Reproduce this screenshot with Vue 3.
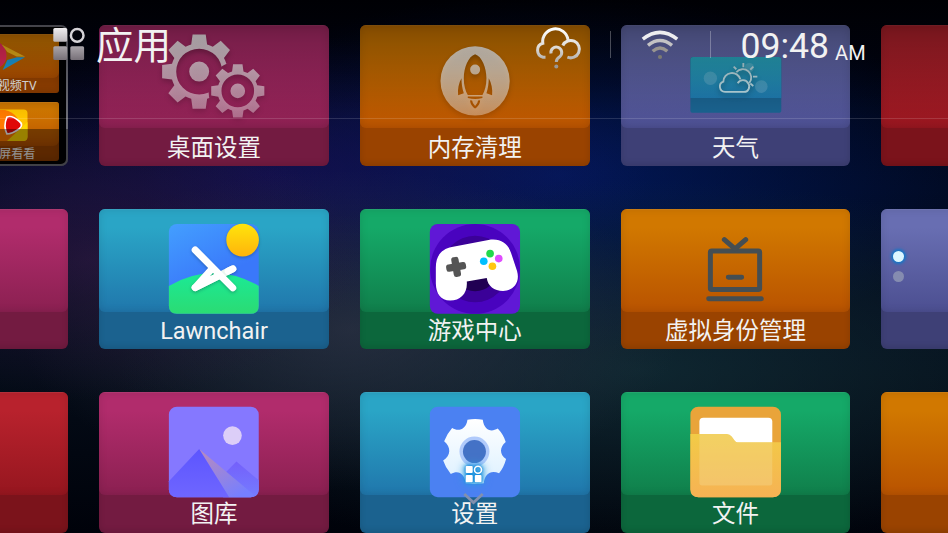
<script setup>
import { ref } from "vue";

const time = ref("09:48");
const period = ref("AM");

/**
 * APP TILES
 * origin = top left corner of the artwork inside its own drawing space
 */
const tiles = [
    { id: "desk", name: "桌面设置", color: "pink", origin: "27.6 30" },
    { id: "clean", name: "内存清理", color: "orange", origin: "29.7 30" },
    { id: "weather", name: "天气", color: "indigo", origin: "62 30" },
    { id: "r1", name: "", color: "red", origin: "0 0" },
    { id: "l2", name: "", color: "pink", origin: "0 0" },
    { id: "lawn", name: "Lawnchair", color: "cyan", origin: "27.6 26" },
    { id: "game", name: "游戏中心", color: "green", origin: "29.7 26" },
    { id: "tv", name: "虚拟身份管理", color: "orange", origin: "32 26" },
    { id: "r2", name: "", color: "indigo", origin: "0 0" },
    { id: "l3", name: "", color: "red", origin: "0 0" },
    { id: "gallery", name: "图库", color: "pink", origin: "27.6 22" },
    { id: "settings", name: "设置", color: "cyan", origin: "29.7 22" },
    { id: "files", name: "文件", color: "green", origin: "32 22" },
    { id: "r3", name: "", color: "orange", origin: "0 0" },
];

const folder = [
    { id: "video", name: "云视频TV", color: "orange" },
    { id: "watch", name: "大屏看看", color: "orange" },
];

// eight teeth, a ring and a hub
const gearPath = (cx, cy, outer, body, hole, hub) => {
    const pts = [];
    for (let i = 0; i < 8; i++) {
        const a = (i * Math.PI) / 4 - Math.PI / 2;
        for (const [r, d] of [
            [body, -0.285],
            [outer, -0.175],
            [outer, 0.175],
            [body, 0.285],
        ]) {
            pts.push(`${(cx + r * Math.cos(a + d)).toFixed(1)} ${(cy + r * Math.sin(a + d)).toFixed(1)}`);
        }
        const m = a + Math.PI / 8;
        pts.push(`${(cx + body * Math.cos(m)).toFixed(1)} ${(cy + body * Math.sin(m)).toFixed(1)}`);
    }
    const circle = (r) => `M${cx - r} ${cy}a${r} ${r} 0 1 0 ${2 * r} 0a${r} ${r} 0 1 0 ${-2 * r} 0Z`;
    return `M${pts.join("L")}Z${circle(hole)}${circle(hub)}`;
};

const bigGear = gearPath(328, 170, 113, 85, 69, 30);
const smallGear = gearPath(444, 228, 81, 61, 49, 22);
</script>

<template>
    <div class="launcher">
        <main class="tiles">
            <section class="folder">
                <div v-for="app in folder" :key="app.id" class="tile mini" :class="app.color">
                    <div class="face"></div>
                    <svg class="art" viewBox="0 0 96 59">
                        <g v-if="app.id === 'video'">
                            <path d="M37 9Q43 13 43.5 21Q44 29 37 33L30 36V6Z" fill="#ee2c5c" />
                            <path d="M38.700 10.500L62.300 22.700L53.700 22.500L44.300 18Z" fill="#f2b81c" />
                            <path d="M62 23.300L39.700 36L44.300 26L54 23.300Z" fill="#1ea4e6" />
                        </g>
                        <g v-else>
                            <rect x="32" y="7.500" width="32.500" height="31.500" rx="4" fill="#ffc400" />
                            <path d="M32 8H42Q56 11 60 30L52 39H32Z" fill="#ff7a00" />
                            <path d="M64.500 20V35Q64 39 60 39H44Z" fill="#ffd800" />
                            <path d="M44 15Q49 13 56 19Q61 23 56 27Q49 32 44 32Q40 24 44 15Z" fill="#e00808" stroke="#fff" stroke-width="1.700" />
                        </g>
                    </svg>
                    <span class="label">{{ app.name }}</span>
                </div>
            </section>

            <div v-for="tile in tiles" :key="tile.id" class="tile" :class="tile.color">
                <div class="face"></div>
                <svg class="art" :viewBox="`${tile.origin} 689 423`">
                    <!-- GEARS -->
                    <g v-if="tile.id === 'desk'" class="raised">
                        <defs>
                            <linearGradient id="gearFill" gradientUnits="userSpaceOnUse" x1="0" y1="58" x2="0" y2="305">
                                <stop offset="0" stop-color="#fff" stop-opacity=".92" />
                                <stop offset="1" stop-color="#fff" stop-opacity=".36" />
                            </linearGradient>
                            <mask id="gearCut" maskUnits="userSpaceOnUse" x="200" y="40" width="340" height="280">
                                <rect x="200" y="40" width="340" height="280" fill="#fff" />
                                <circle cx="444" cy="228" r="88" fill="#000" />
                            </mask>
                        </defs>
                        <path :d="bigGear" fill="url(#gearFill)" fill-rule="evenodd" mask="url(#gearCut)" />
                        <path :d="smallGear" fill="url(#gearFill)" fill-rule="evenodd" />
                    </g>

                    <!-- ROCKET -->
                    <g v-else-if="tile.id === 'clean'" class="raised">
                        <defs>
                            <linearGradient id="rocketFill" gradientUnits="userSpaceOnUse" x1="0" y1="94" x2="0" y2="302">
                                <stop offset="0" stop-color="#fff" stop-opacity=".88" />
                                <stop offset="1" stop-color="#fff" stop-opacity=".36" />
                            </linearGradient>
                        </defs>
                        <path
                            fill="url(#rocketFill)"
                            fill-rule="evenodd"
                            d="M271 198a104 104 0 1 0 208 0a104 104 0 1 0 -208 0Z
                               M375 118C395 124 409 158 409 190C409 212 404 228 397 240H353C346 228 341 212 341 190C341 158 355 124 375 118Z
                               M360 164a15 15 0 1 0 30 0a15 15 0 1 0 -30 0Z
                               M334 190C326 205 322 222 324 241L341 235C336 220 334 205 334 190Z
                               M416 190C424 205 428 222 426 241L409 235C414 220 416 205 416 190Z
                               M353 245H397V249Q375 255 353 249Z
                               M360 256C360 268 368 276 375 281C382 276 390 268 390 256L384 257Q383 267 375 273Q367 267 366 257Z"
                        />
                    </g>

                    <!-- WEATHER -->
                    <g v-else-if="tile.id === 'weather'">
                        <defs>
                            <linearGradient id="skyFill" x1="0" y1="0" x2="0" y2="1">
                                <stop offset="0" stop-color="#29aac3" />
                                <stop offset="1" stop-color="#1f7bb0" />
                            </linearGradient>
                        </defs>
                        <rect x="270" y="126" width="273" height="168" rx="8" fill="#1a6390" />
                        <path d="M270 249V134q0-8 8-8H535q8 0 8 8V249Z" fill="url(#skyFill)" />
                        <g fill="#fff" fill-opacity=".16">
                            <circle cx="330" cy="190" r="20" />
                            <circle cx="483" cy="215" r="19" />
                            <circle cx="447" cy="158" r="14" />
                        </g>
                        <g class="raised" fill="none" stroke="#bcdce4" stroke-width="5.500">
                            <path d="M374 231H430A16 16 0 0 0 444 206A18 18 0 0 0 412 205M420 193A26 26 0 0 0 369 200A16 16 0 0 0 374 231M408 172A24 24 0 1 1 447 204" />
                            <path d="M429 144V157M400 155L408 163M459 155L450 164M458 185H471M450 206L459 213" />
                        </g>
                    </g>

                    <!-- LAWNCHAIR -->
                    <g v-else-if="tile.id === 'lawn'">
                        <defs>
                            <linearGradient id="lawnSky" x1="0" y1="0" x2=".5" y2="1">
                                <stop offset="0" stop-color="#439fff" />
                                <stop offset=".7" stop-color="#3a78fa" />
                            </linearGradient>
                            <linearGradient id="lawnSun" x1="0" y1="0" x2="0" y2="1">
                                <stop offset="0" stop-color="#ffe40c" />
                                <stop offset="1" stop-color="#ffb40c" />
                            </linearGradient>
                            <linearGradient id="lawnHill" x1="0" y1="0" x2="0" y2="1">
                                <stop offset="0" stop-color="#1bea96" />
                                <stop offset="1" stop-color="#2bdb73" />
                            </linearGradient>
                        </defs>
                        <rect x="237" y="71" width="270" height="270" rx="24" fill="url(#lawnSky)" />
                        <path d="M237 257Q372 180 507 257V317q0 24-24 24H261q-24 0-24-24Z" fill="url(#lawnHill)" />
                        <circle class="soft" cx="458.500" cy="119.500" r="49" fill="url(#lawnSun)" />
                        <g class="soft" fill="none" stroke-width="21" stroke-linecap="round">
                            <path d="M316 262L429 206" stroke="#e9f7ef" />
                            <path d="M429 206L415 213" stroke="#fff" />
                            <path d="M316 262L368 204M316 262L385 228" stroke="#fff" />
                            <path d="M316 149L429 263" stroke="#fff" />
                        </g>
                    </g>

                    <!-- GAMEPAD -->
                    <g v-else-if="tile.id === 'game'">
                        <rect x="239" y="71" width="271" height="270" rx="24" fill="#6018d6" />
                        <circle cx="375" cy="206" r="135" fill="#4903bf" />
                        <circle cx="375" cy="206" r="100" fill="#3b0198" />
                        <circle cx="375" cy="206" r="67" fill="#210053" />
                        <path
                            fill="#fff"
                            d="M257 202C257 165 275 146 305 140L415 119C452 113 474 130 483 158L501 212C511 247 490 272 459 272C432 272 413 257 410 233L350 244C353 279 331 301 300 301C271 301 258 281 257 250Z"
                        />
                        <g transform="rotate(-10 318 200)" fill="#555">
                            <rect x="288" y="189" width="60" height="22" rx="8" />
                            <rect x="307" y="170" width="22" height="60" rx="8" />
                        </g>
                        <circle cx="420" cy="160" r="11.500" fill="#23d94c" />
                        <circle cx="446" cy="175" r="11.500" fill="#df4cff" />
                        <circle cx="401" cy="183" r="11.500" fill="#00bfff" />
                        <circle cx="427" cy="198" r="11.500" fill="#ffc710" />
                    </g>

                    <!-- TV BOX -->
                    <g v-else-if="tile.id === 'tv'" fill="none" stroke="#454e52" stroke-width="15" stroke-linecap="round" stroke-linejoin="round">
                        <rect x="300" y="152" width="148" height="116" rx="4" />
                        <path d="M342 118L374 146L406 118M354 231H394M295 296H453" />
                    </g>

                    <!-- GALLERY -->
                    <g v-else-if="tile.id === 'gallery'">
                        <defs>
                            <linearGradient id="slope" x1="0" y1="0" x2=".7" y2="1">
                                <stop offset="0" stop-color="#bb8bbb" />
                                <stop offset="1" stop-color="#767fff" />
                            </linearGradient>
                            <linearGradient id="peak" x1="0" y1="0" x2="0" y2="1">
                                <stop offset="0" stop-color="#5c55ff" />
                                <stop offset="1" stop-color="#6f66ff" />
                            </linearGradient>
                            <linearGradient id="backPeak" x1="0" y1="0" x2="0" y2="1">
                                <stop offset="0" stop-color="#7460fb" />
                                <stop offset="1" stop-color="#757cff" />
                            </linearGradient>
                        </defs>
                        <rect x="237" y="66" width="270" height="272" rx="24" fill="#8578ff" />
                        <circle cx="428" cy="153" r="28" fill="#dccef8" />
                        <path d="M440 231L507 287V314q0 24-24 24H400L380 292Z" fill="url(#backPeak)" />
                        <path d="M328 193L418 338H483L492 331Z" fill="url(#slope)" />
                        <path d="M328 193L237 290V314q0 24 24 24H418Z" fill="url(#peak)" />
                    </g>

                    <!-- SETTINGS -->
                    <g v-else-if="tile.id === 'settings'">
                        <defs>
                            <linearGradient id="cogFill" x1="0" y1="0" x2="0" y2="1">
                                <stop offset="0" stop-color="#fff" />
                                <stop offset="1" stop-color="#dcf0ff" />
                            </linearGradient>
                        </defs>
                        <rect x="239" y="66" width="271" height="272" rx="24" fill="#4b81f2" />
                        <path
                            fill="url(#cogFill)"
                            d="M352 105Q375 101 398 105C402 136 422 144 443 132Q460 150 467 172C448 188 448 210 468 223Q462 247 447 266C422 255 404 268 401 296Q375 301 347 296C343 268 326 255 302 268Q286 250 279 228C303 212 303 188 282 170Q290 148 306 130C325 142 348 134 352 105Z"
                        />
                        <circle cx="373" cy="201" r="45" fill="#b0cafb" />
                        <circle cx="373" cy="201" r="34.500" fill="#4472c6" />
                    </g>

                    <!-- FILES -->
                    <g v-else-if="tile.id === 'files'">
                        <defs>
                            <linearGradient id="fileFill" x1="0" y1="0" x2="0" y2="1">
                                <stop offset="0" stop-color="#f2cb46" />
                                <stop offset="1" stop-color="#f6b254" />
                            </linearGradient>
                        </defs>
                        <rect x="240" y="66" width="272" height="272" rx="24" fill="#e9a43a" />
                        <rect x="267" y="99" width="219" height="110" rx="12" fill="#fff" />
                        <path d="M240 148H350Q358 148 364 156L374 169Q377 173 382 173H512V314q0 24-24 24H264q-24 0-24-24Z" fill="url(#fileFill)" />
                        <path d="M267 148H350Q358 148 364 156L374 169Q377 173 382 173H486V295q0 8-8 8H275q-8 0-8-8Z" fill="#f4e0a0" fill-opacity=".32" />
                    </g>
                </svg>
                <span class="label">{{ tile.name }}</span>
            </div>
        </main>

        <!-- TOP BAR -->
        <header class="topbar">
            <div class="topbar-row">
                <svg class="apps-icon" width="32" height="44" viewBox="53 24 32 44">
                    <defs>
                        <linearGradient id="appsFill" gradientUnits="userSpaceOnUse" x1="0" y1="28" x2="0" y2="60">
                            <stop offset="0" stop-color="#efedef" />
                            <stop offset="1" stop-color="#777078" />
                        </linearGradient>
                    </defs>
                    <g fill="url(#appsFill)">
                        <rect x="53.300" y="28" width="13.800" height="13.800" rx="1.500" />
                        <rect x="53.300" y="46.200" width="13.800" height="13.800" rx="1.500" />
                        <rect x="70.300" y="46.200" width="13.800" height="13.800" rx="1.500" />
                    </g>
                    <circle cx="77.200" cy="35.400" r="6.300" fill="none" stroke="#d4d2d6" stroke-width="2.500" />
                </svg>
                <h1 class="title">应用</h1>

                <div class="status">
                    <svg class="cloud" width="50" height="44" viewBox="0 -1 50 44">
                        <defs>
                            <linearGradient id="cloudStroke" gradientUnits="userSpaceOnUse" x1="0" y1="3" x2="0" y2="43">
                                <stop offset="0" stop-color="#fff" />
                                <stop offset=".5" stop-color="#dcd9d5" />
                                <stop offset="1" stop-color="#9a9896" />
                            </linearGradient>
                        </defs>
                        <g fill="none" stroke="url(#cloudStroke)" stroke-width="3">
                            <path d="M12.500 32.200H10A7.200 7.200 0 0 1 9.800 18.300A12.500 12.500 0 0 1 35 14.800M29.800 20.500A8.700 8.700 0 1 1 34.400 32.200" />
                            <path d="M18 28.500A5.400 5.400 0 1 1 27 31.500Q23.300 33.700 23.300 37" />
                        </g>
                        <circle cx="23.300" cy="41.400" r="2" fill="#9a9896" />
                    </svg>
                    <span class="divider"></span>
                    <svg class="wifi" width="38" height="44" viewBox="641 24 38 44">
                        <g fill="none" stroke-width="3.500">
                            <path d="M642.800 39.200Q660 25.500 677.200 39.200" stroke="#eeeef0" />
                            <path d="M648 45.300Q660 35.800 672 45.300" stroke="#c4c3c4" />
                            <path d="M652.700 51.200Q660 44.800 667.300 51.200" stroke="#999590" />
                        </g>
                        <circle cx="660" cy="57" r="2.100" fill="#7c7a72" />
                    </svg>
                    <span class="divider"></span>
                    <span class="clock">{{ time }}</span>
                    <span class="period">{{ period }}</span>
                </div>
            </div>
        </header>

        <!-- PAGE DOTS -->
        <div class="pages">
            <i class="dot active"></i>
            <i class="dot"></i>
        </div>

        <!-- DRAWER HINT -->
        <svg class="drawer" width="40" height="50" viewBox="454 460 40 50">
            <g class="glow">
                <rect x="465.700" y="466" width="7" height="7" rx="1" fill="#fff" />
                <rect x="465.700" y="475" width="7" height="7.300" rx="1" fill="#fff" />
                <rect x="474.800" y="475" width="6.700" height="7.300" rx="1" fill="#fff" />
                <circle cx="478" cy="469.700" r="3.500" fill="none" stroke="#fff" stroke-width="1.600" />
            </g>
            <path d="M464.300 494L473.500 502.500L482.700 494" fill="none" stroke="#8290ae" stroke-width="2.800" />
        </svg>
    </div>
</template>

<style>
body {
    background: #00010a;
    overflow: hidden;
}
</style>

<style scoped>
.launcher {
    position: relative;
    width: 948px;
    height: 533px;
    overflow: hidden;
    font-family: Roboto, "Noto Sans CJK SC", sans-serif;
    color: #f2f2f2;
    background:
        radial-gradient(ellipse 270px 140px at 90px 260px, rgba(52, 26, 68, 0.6), transparent),
        radial-gradient(ellipse 330px 160px at 350px 330px, rgba(54, 58, 78, 0.62), transparent),
        radial-gradient(ellipse 520px 190px at 640px 370px, rgba(22, 56, 64, 0.6), transparent),
        radial-gradient(ellipse 380px 140px at 270px 175px, rgba(32, 18, 98, 0.55), transparent),
        radial-gradient(ellipse 420px 180px at 560px 175px, rgba(2, 28, 105, 0.75), transparent),
        linear-gradient(#000008, #010a22 35%, #040c18 70%, #00020a);
}

.tiles {
    display: grid;
    grid-template-columns: repeat(5, 229.7px);
    grid-auto-rows: 140.8px;
    gap: 42.6px 31px;
    margin-left: -161.5px;
    padding-top: 25.2px;
}

/* TILE */
.tile {
    display: grid;
    grid-template: 103px 1fr / 1fr;
    border-radius: 6px;
    overflow: hidden;
    background: var(--base);
    box-shadow: inset 0 -2px 6px rgba(0, 0, 0, 0.12);
}

.face {
    grid-area: 1 / 1;
    border-radius: 0 0 6px 6px;
    background: linear-gradient(var(--top) 18%, var(--bottom));
    box-shadow:
        inset 0 1px 1px rgba(255, 255, 255, 0.08),
        inset 0 0 8px rgba(0, 0, 0, 0.12);
}

.art {
    grid-area: 1 / 1 / 3 / 2;
    width: 100%;
    height: 100%;
}

.label {
    grid-area: 2 / 1;
    place-self: center;
    white-space: nowrap;
    font-size: 23.5px;
    line-height: 36px;
    padding-top: 1.2px;
}

.pink {
    --top: #b12c6c;
    --bottom: #8b2051;
    --base: #731b41;
}

.orange {
    --top: #d17800;
    --bottom: #b95300;
    --base: #9a4300;
}

.indigo {
    --top: #686eb2;
    --bottom: #4c4f91;
    --base: #3e4076;
}

.red {
    --top: #b8222d;
    --bottom: #96161f;
    --base: #7b131b;
}

.cyan {
    --top: #2aa5c6;
    --bottom: #2077ac;
    --base: #1b628f;
}

.green {
    --top: #15a968;
    --bottom: #107f4b;
    --base: #0c673c;
}

/* FOLDER */
.folder {
    position: relative;
    box-sizing: border-box;
    display: grid;
    grid-template: 59px 59px / 96px;
    gap: 9px;
    justify-content: end;
    padding: 7px;
    border: 2px solid #6c6c76;
    border-radius: 7px;
    background: #010103;
}

.folder::after {
    content: "";
    position: absolute;
    inset: 102px -2px -2px;
    background: rgba(0, 0, 0, 0.4);
    border-radius: 0 0 7px 7px;
}

.mini {
    grid-template: 44px 15px / 1fr;
    border-radius: 3px;
}

.mini .label {
    font-size: 12px;
    line-height: 15px;
}

.raised {
    filter: drop-shadow(0 9px 8px rgba(0, 0, 0, 0.3));
}

.soft {
    filter: drop-shadow(0 4px 5px rgba(0, 40, 60, 0.3));
}

/* TOP BAR */
.topbar {
    position: absolute;
    inset: 0 0 auto;
    height: 118px;
    border-bottom: 1px solid rgba(255, 255, 255, 0.14);
    background: linear-gradient(rgba(0, 0, 0, 0.48), transparent) padding-box;
}

.topbar-row {
    display: flex;
    align-items: center;
    height: 92px;
    padding-left: 53px;
}

.title {
    width: 436.5px;
    margin: 0 0 0 11px;
    font-size: 37.5px;
    font-weight: 400;
    line-height: 44px;
}

.status {
    display: flex;
    align-items: center;
}

.cloud {
    margin-right: 27px;
    overflow: visible;
}

.wifi {
    margin-right: 31px;
}

.divider {
    width: 1px;
    height: 27px;
    margin: 0 30px 3px 0;
    background: rgba(255, 255, 255, 0.28);
}

.clock {
    font-size: 35.6px;
    line-height: 44px;
    margin-right: 6px;
}

.period {
    font-size: 20px;
    line-height: 24px;
    margin-top: 13px;
}

/* OVERLAYS */
.pages {
    position: absolute;
    left: 892px;
    top: 251px;
    display: grid;
    gap: 9px;
    justify-items: center;
    width: 12px;
}

.dot {
    width: 11px;
    height: 11px;
    border-radius: 50%;
    background: #858cb0;
}

.dot.active {
    background: #dcf6ff;
    box-shadow: 0 0 3px 2px #1377c8;
}

.drawer {
    position: absolute;
    left: 454px;
    top: 460px;
    overflow: visible;
}

.glow {
    filter: drop-shadow(0 0 1px #0f84d8) drop-shadow(0 0 2px #1590e0) drop-shadow(0 0 4px #2fa0e0);
}
</style>
